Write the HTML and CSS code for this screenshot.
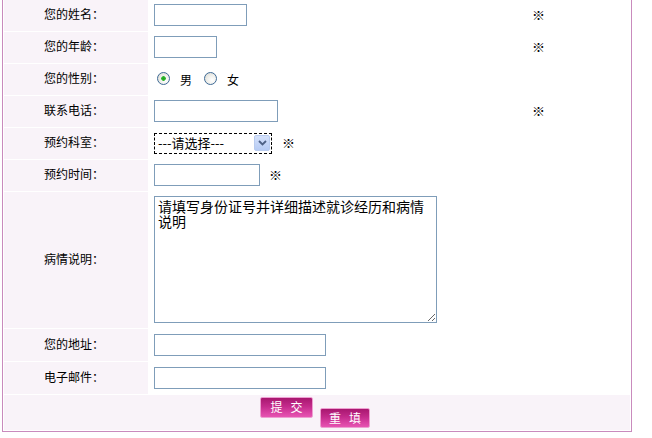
FILE: index.html
```html
<!DOCTYPE html>
<html lang="zh-CN">
<head>
<meta charset="utf-8">
<title>预约挂号</title>
<link rel="stylesheet" href="styles.css">
</head>
<body>
<form class="form">
  <div class="label">您的姓名：</div>
  <div class="value"><input class="text w-name" type="text"></div>
  <div class="mark">※</div>

  <div class="label">您的年龄：</div>
  <div class="value"><input class="text w-age" type="text"></div>
  <div class="mark">※</div>

  <div class="label">您的性别：</div>
  <div class="value span2 radios">
    <label class="radio"><input type="radio" name="sex" checked><span>男</span></label>
    <label class="radio"><input type="radio" name="sex"><span>女</span></label>
  </div>

  <div class="label">联系电话：</div>
  <div class="value"><input class="text w-phone" type="text"></div>
  <div class="mark">※</div>

  <div class="label">预约科室：</div>
  <div class="value span2">
    <div class="select">
      <span class="select-text">---请选择---</span>
      <span class="select-btn"><svg width="9" height="6" viewBox="0 0 9 6"><path d="M1 1 L4.5 4.5 L8 1" fill="none" stroke="#4d6185" stroke-width="1.8"/></svg></span>
    </div>
    <span class="inline-mark">※</span>
  </div>

  <div class="label">预约时间：</div>
  <div class="value span2"><input class="text w-time" type="text"><span class="inline-mark small">※</span></div>

  <div class="label">病情说明：</div>
  <div class="value span2"><textarea class="area">请填写身份证号并详细描述就诊经历和病情说明</textarea></div>

  <div class="label">您的地址：</div>
  <div class="value span2"><input class="text w-addr" type="text"></div>

  <div class="label">电子邮件：</div>
  <div class="value span2"><input class="text w-addr" type="text"></div>

  <div class="buttons">
    <button type="submit" class="btn btn-submit">提交</button>
    <button type="reset" class="btn btn-reset">重填</button>
  </div>
</form>
</body>
</html>
```
FILE: styles.css
```css
html, body {
  margin: 0;
  padding: 0;
  background: #ffffff;
}

body {
  font-family: "Noto Sans CJK SC", "Noto Sans", "DejaVu Sans", sans-serif;
  font-size: 12px;
  color: #000;
}

.form {
  display: grid;
  grid-template-columns: 144px 371px 109px;
  grid-template-rows: 31px 31px 31px 31px 31px 31px 136px 32px 32px 35px;
  gap: 1px;
  padding: 1px;
  width: 630px;
  box-sizing: border-box;
  margin: -2px 0 0 2px;
  border: 1px solid #c98bbd;
  background: #ffffff;
}

.label {
  background: #f9f3f9;
  display: flex;
  align-items: center;
  justify-content: center;
  padding: 0 4px 3px 0;
  line-height: 1;
}

.value {
  display: flex;
  align-items: center;
  padding-left: 5px;
  background: #ffffff;
}

.span2 {
  grid-column: 2 / 4;
}

.mark {
  display: flex;
  align-items: center;
  padding: 0 0 3px 11px;
  font-size: 13px;
  font-weight: bold;
}

.text {
  box-sizing: border-box;
  height: 22px;
  border: 1px solid #7f9db9;
  padding: 1px 3px;
  margin: 0 0 1px;
  background: #fff;
  font: inherit;
  outline: none;
}

.w-name { width: 93px; }
.w-age { width: 63px; }
.w-phone { width: 124px; }
.w-time { width: 106px; }
.w-addr { width: 172px; }

.radios {
  padding: 0 0 3px 8px;
}

.radio {
  display: flex;
  align-items: center;
  margin-right: 12px;
}

.radio span {
  margin-left: 10px;
  position: relative;
  top: 1px;
}

.radio input {
  appearance: none;
  -webkit-appearance: none;
  width: 13px;
  height: 13px;
  margin: 0;
  border: 1px solid #3e6a96;
  border-radius: 50%;
  box-sizing: border-box;
  background: radial-gradient(circle at 65% 65%, #ffffff 0%, #f0f0ec 45%, #d6d6ce 100%);
}

.radio input:checked {
  background:
    radial-gradient(circle at 50% 50%, #1fa31f 0, #32b832 2px, transparent 2.6px),
    radial-gradient(circle at 65% 65%, #ffffff 0%, #f0f0ec 45%, #d6d6ce 100%);
}

.select {
  box-sizing: border-box;
  width: 118px;
  height: 21px;
  border: 1px dashed #000;
  display: flex;
  align-items: center;
  justify-content: space-between;
  padding: 0 1px 0 3px;
  margin-bottom: 1px;
  background: #fff;
}

.select-text {
  font-size: 13px;
  line-height: 1;
  position: relative;
  top: -1px;
}

.select-btn {
  width: 16px;
  height: 16px;
  box-sizing: border-box;
  border: 1px solid #b8cbef;
  border-radius: 2px;
  background: linear-gradient(#d4e1fb, #b6cbf4);
  display: flex;
  align-items: center;
  justify-content: center;
}

.inline-mark {
  margin-left: 10px;
  font-size: 13px;
  font-weight: bold;
  position: relative;
  top: -1px;
}

.inline-mark.small {
  margin-left: 9px;
}

.area {
  box-sizing: border-box;
  width: 283px;
  height: 127px;
  border: 1px solid #7f9db9;
  padding: 2px 2px 2px 3px;
  margin: 0 0 2px;
  font-family: "Noto Sans CJK SC", sans-serif;
  font-size: 14px;
  line-height: 15px;
  resize: both;
  overflow: hidden;
  outline: none;
}

.buttons {
  grid-column: 1 / 4;
  background: #f9f3f9;
  display: flex;
  justify-content: center;
  align-items: flex-start;
  gap: 7px;
  padding: 2px 4px 2px 0;
}

.btn {
  box-sizing: border-box;
  margin: 0;
  padding: 0 0 1px 8px;
  border: 1px solid #ee9fd2;
  border-radius: 2px;
  background: linear-gradient(#a8176f 0%, #c42b8c 45%, #dc45a6 80%, #e655b2 100%);
  color: #fff;
  font-family: "Noto Sans CJK SC", sans-serif;
  font-size: 12px;
  letter-spacing: 8px;
  line-height: 1;
  cursor: pointer;
}

.btn-submit {
  width: 53px;
  height: 21px;
}

.btn-reset {
  width: 50px;
  height: 20px;
  align-self: flex-end;
}
```
